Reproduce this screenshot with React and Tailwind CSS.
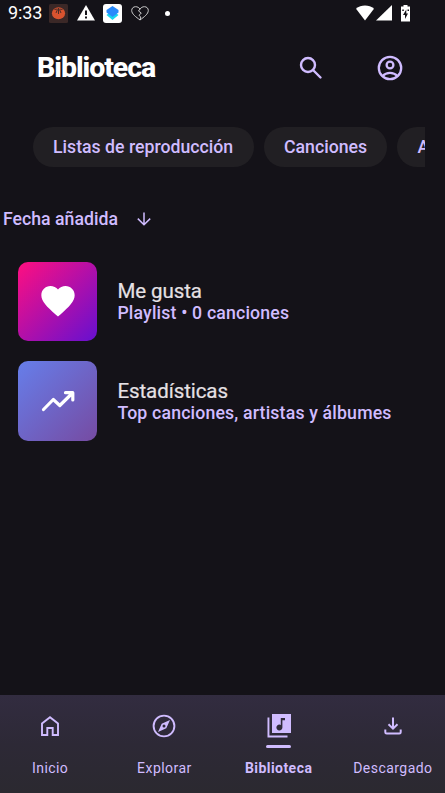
import React from 'react';

const chips = [
  { label: 'Listas de reproducción', width: 'w-[221px]' },
  { label: 'Canciones', width: 'w-[123.400px]' },
  { label: 'Artistas', width: 'w-[112px]' },
];

function Icon({ d, className }) {
  return (
    <svg viewBox="0 0 24 24" fill="currentColor" className={className}>
      <path d={d} />
    </svg>
  );
}

function StatusBar() {
  return (
    <div className="flex h-[26px] shrink-0 items-center pl-[8px] text-white">
      <span className="w-[41px] text-[18px] leading-[26px] tracking-[-0.1px]">9:33</span>
      <svg viewBox="0 0 19 19" className="h-[19px] w-[19px]">
        <rect width="19" height="19" rx="1.5" fill="#3b2827" />
        <ellipse cx="9.5" cy="9.2" rx="6.6" ry="6" fill="#d9532f" />
        <path d="M9.500 4v6M5.500 5.500l3-.5M13.500 5.500l-3-.5M7 9l1.500-3.500M12 9l-1.500-3.500" stroke="#3b2827" strokeWidth="0.9" fill="none" />
      </svg>
      <svg viewBox="0 0 18 16" className="ml-[9px] h-[16px] w-[18px]">
        <path d="M9 0 18 15.500H0z" fill="#fff" />
        <path d="M8 5.500h2v4.500H8zM8 11.500h2v2H8z" fill="#141218" />
      </svg>
      <svg viewBox="0 0 19 19" className="ml-[8px] h-[19px] w-[19px]">
        <rect width="19" height="19" rx="3" fill="#fff" />
        <path d="m9.500 6.500 6 4.500-6 5-6-5z" fill="#16d5ee" />
        <path d="m9.500 2 6 4v2.500l-6 4.500-6-4.500V6z" fill="#2889fb" />
      </svg>
      <svg viewBox="0 0 18 15" className="ml-[9px] h-[15px] w-[18px]" fill="none" stroke="#ddd" strokeWidth="0.9">
        <path d="M9 14C5 11 .7 8 .7 4.500.7 2.300 2.300.7 4.500.7 6.500.7 8 1.500 9 3.200 10 1.500 11.500.7 13.500.7c2.200 0 3.800 1.600 3.800 3.800C17.300 8 13 11 9 14z" />
        <path d="M9 3 7.500 5l2.800 2-2.300 2.300L9.800 11 9 14" />
      </svg>
      <span className="ml-[16px] h-[5px] w-[5px] rounded-full bg-white" />
      <svg viewBox="0 0 20 16" className="ml-[185px] h-[16px] w-[20px]">
        <path d="M1 3.800C6-.5 14-.5 19 3.800L10 15.500z" fill="#fff" />
      </svg>
      <svg viewBox="0 0 16 16" className="ml-px h-[16px] w-[16px]">
        <path d="M16 0v15.500H0z" fill="#fff" />
      </svg>
      <svg viewBox="0 0 9 17" className="ml-[9px] h-[17px] w-[9px]">
        <path d="M2.500 0h4v1.500H9V16.500H0V1.500h2.500z" fill="#fff" />
        <path d="M5.300 4.500 2 10h2v4l3-5.500H5.300zM1.300 4.500h1.500V6H1.300zM6.500 4.500H8V6H6.500z" fill="#141218" />
      </svg>
    </div>
  );
}

function Header() {
  return (
    <header className="flex h-[83px] shrink-0 items-center pl-[37px] pr-[42px]">
      <h1 className="flex-1 text-[28.500px] leading-[34px] font-extrabold tracking-[-1.050px] text-white">Biblioteca</h1>
      <svg viewBox="0 0 24 24" className="h-[24px] w-[24px]" fill="none" stroke="currentColor" strokeWidth="2.400">
        <circle cx="9" cy="9" r="7" />
        <path d="m14 14 7.500 7.500" strokeLinecap="round" />
      </svg>
      <svg viewBox="0 0 26 26" className="ml-[54px] h-[26px] w-[26px]" fill="none" stroke="currentColor" strokeWidth="2.300">
        <circle cx="13" cy="13" r="11.200" />
        <circle cx="13" cy="10" r="3.400" />
        <path d="M5.500 21c4-4.300 11-4.300 15 0" />
      </svg>
    </header>
  );
}

function LibraryItem({ cover, title, subtitle, children }) {
  return (
    <div className="flex items-center gap-[20px]">
      <div className={`flex h-[79.500px] w-[79.500px] shrink-0 items-center justify-center rounded-[10px] text-white ${cover}`}>
        {children}
      </div>
      <div className="pt-[2px] whitespace-nowrap">
        <p className="text-[20.500px] leading-[22px] tracking-[-0.080px] text-[#e6e1e5] [-webkit-text-stroke:0.2px]">{title}</p>
        <p className="text-[17.700px] leading-[22px] font-medium tracking-[0.170px]">{subtitle}</p>
      </div>
    </div>
  );
}

function NavItem({ label, active, children }) {
  return (
    <button className="flex flex-col items-center">
      <span className="mt-[17.500px] flex h-[28px] items-center justify-center">{children}</span>
      <span className={`mt-[5px] h-[2.500px] w-[25px] rounded-full ${active ? 'bg-[#d0bcff]' : ''}`} />
      <span className={`mt-[11.500px] text-[14px] leading-[18px] tracking-[0.450px] ${active ? 'font-bold' : ''}`}>{label}</span>
    </button>
  );
}

export default function App() {
  return (
    <div className="flex h-[793px] w-[445px] flex-col overflow-hidden bg-[#141218] font-['Roboto',sans-serif] text-[#d0bcff]">
      <StatusBar />
      <Header />

      <div className="mt-[18px] ml-[33px] mr-[20px] flex shrink-0 gap-[10px] overflow-hidden">
        {chips.map((chip) => (
          <button
            key={chip.label}
            className={`h-[40px] shrink-0 rounded-full bg-[#211f23] pl-[20px] text-left text-[17.700px] font-medium tracking-[0px] whitespace-nowrap ${chip.width}`}
          >
            {chip.label}
          </button>
        ))}
      </div>

      <div className="mt-[41px] flex h-[22px] shrink-0 items-center gap-[19px] pl-[3px]">
        <span className="text-[17.700px] font-medium tracking-[0px]">Fecha añadida</span>
        <svg viewBox="0 0 14 14" className="h-[14px] w-[14px]" fill="none" stroke="currentColor" strokeWidth="1.500">
          <path d="M7 .5v12M.8 6.600 7 12.700l6.200-6.100" />
        </svg>
      </div>

      <main className="mt-[31.600px] flex flex-1 flex-col gap-[20px] pl-[17.900px]">
        <LibraryItem cover="bg-linear-to-br/srgb from-[#ff0f80] to-[#6610d0]" title="Me gusta" subtitle="Playlist • 0 canciones">
          <Icon className="h-[40px] w-[40px]" d="M12 21.350l-1.450-1.320C5.400 15.360 2 12.280 2 8.500 2 5.420 4.420 3 7.500 3c1.740 0 3.410.81 4.500 2.090C13.090 3.810 14.760 3 16.500 3 19.580 3 22 5.420 22 8.500c0 3.780-3.400 6.860-8.550 11.540L12 21.350z" />
        </LibraryItem>
        <LibraryItem cover="bg-linear-to-br/srgb from-[#667eea] to-[#764ba2]" title="Estadísticas" subtitle="Top canciones, artistas y álbumes">
          <svg viewBox="0 0 34 22" className="h-[22px] w-[34px]" fill="none" stroke="currentColor" strokeWidth="3.200" strokeLinecap="round" strokeLinejoin="round">
            <path d="m2.500 19.500 9.800-10 6.500 6L31 3.500M24.500 2.700h7.300v7.300" />
          </svg>
        </LibraryItem>
      </main>

      <nav className="h-[98.500px] shrink-0 bg-linear-to-b from-[#322c40] via-[#2d2936] to-[#2b2930]">
        <div className="-ml-[7px] grid w-[457px] grid-cols-4">
          <NavItem label="Inicio">
            <svg viewBox="0 0 18 20" className="h-[20px] w-[18px]" fill="none" stroke="currentColor" strokeWidth="1.900">
              <path d="M1 19V7.500L9 1.300l8 6.200V19h-5.300v-7H6.300v7z" />
            </svg>
          </NavItem>
          <NavItem label="Explorar">
            <svg viewBox="0 0 24 24" className="h-[24px] w-[24px]" fill="none">
              <circle cx="12" cy="12" r="10.400" stroke="currentColor" strokeWidth="1.900" />
              <path fill="currentColor" fillRule="evenodd" d="m6 18 3.700-8.300L18 6l-3.700 8.300zM12 10.500a1.500 1.500 0 1 0 0 3 1.500 1.500 0 0 0 0-3z" />
            </svg>
          </NavItem>
          <NavItem label="Biblioteca" active>
            <svg viewBox="0 0 24 24" className="h-[24px] w-[24px]" fill="currentColor">
              <path fillRule="evenodd" d="M5 0h19v19H5zM13.800 4v6.900a3 3 0 1 0 1.600 2.700V6.300H18V4z" />
              <path d="M.5 3.500h1.900v18.100h18.100v1.900H.5z" />
            </svg>
          </NavItem>
          <NavItem label="Descargado">
            <svg viewBox="0 0 18 18" className="h-[18px] w-[18px]" fill="none" stroke="currentColor" strokeWidth="2">
              <path d="M9 .5v11M4.500 7.200 9 11.700l4.500-4.500M1.300 12.500v2.700c0 .8.600 1.400 1.400 1.400h12.600c.8 0 1.400-.6 1.400-1.400v-2.700" />
            </svg>
          </NavItem>
        </div>
      </nav>
    </div>
  );
}
